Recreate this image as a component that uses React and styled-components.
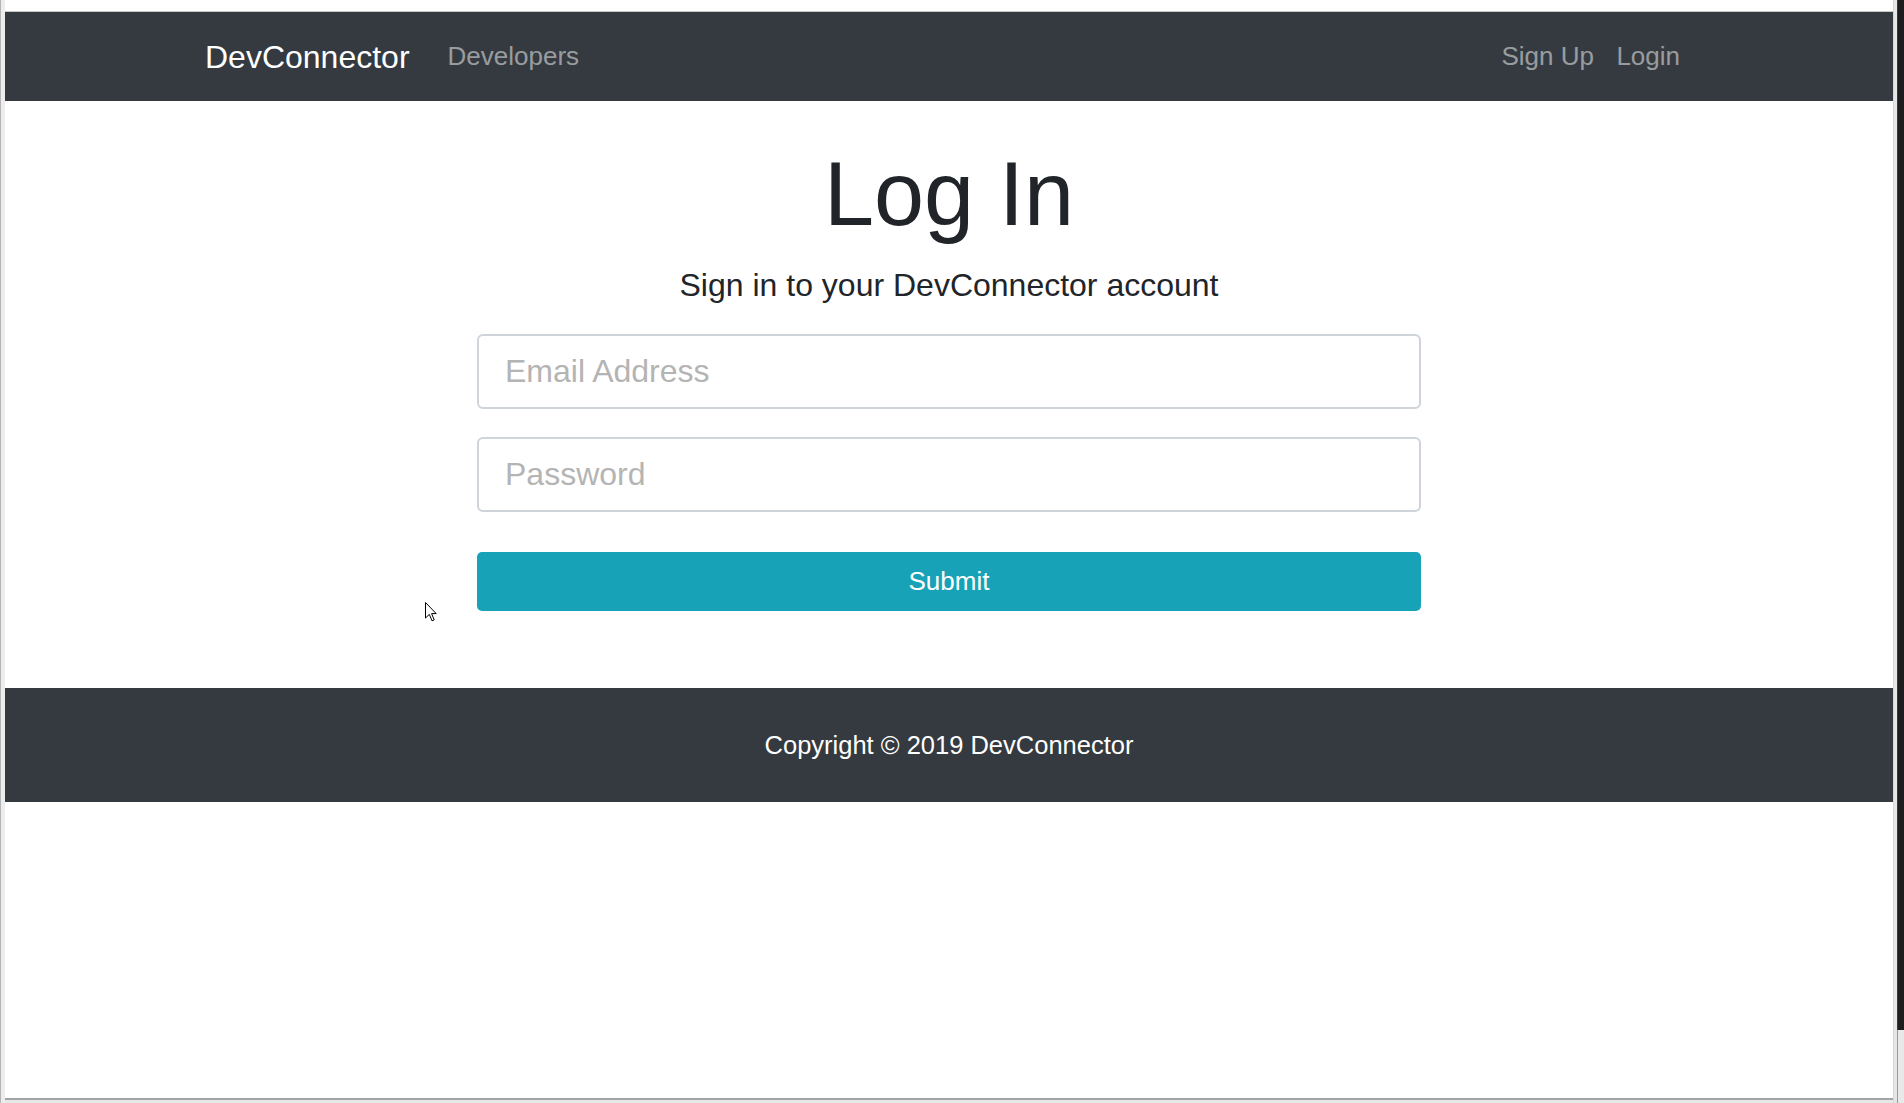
import React from "react";
import styled, { createGlobalStyle } from "styled-components";

const GlobalStyle = createGlobalStyle`
  html, body { margin: 0; padding: 0; height: 100%; }
  body {
    font-family: "Liberation Sans", Arial, sans-serif;
    background: #ffffff;
    overflow: hidden;
  }
  #root { height: 100%; }
  * { box-sizing: border-box; }
`;

const Frame = styled.div`
  display: flex;
  width: 100%;
  height: 100vh;
  position: relative;
`;

const LeftEdge = styled.div`
  width: 5px;
  flex: none;
  border-left: 1px solid #b4b4b4;
  background: #ededed;
`;

const RightEdge = styled.div`
  width: 4px;
  flex: none;
  background: #e6e6e6;
  border-left: 1px solid #d6d6d6;
`;

const OuterEdge = styled.div`
  width: 7px;
  flex: none;
  display: flex;
  flex-direction: column;
`;

const OuterDark = styled.div`
  height: 1030px;
  background: #1d1d1f;
  border-left: 1px solid #3a3a3a;
`;

const OuterLight = styled.div`
  flex: 1;
  background: #e9e9e9;
  border-left: 1px solid #9a9a9a;
`;

const Viewport = styled.div`
  flex: 1;
  display: flex;
  flex-direction: column;
  min-width: 0;
`;

const TopStrip = styled.div`
  height: 12px;
  flex: none;
  background: #ffffff;
  border-bottom: 1px solid #c8c8c8;
`;

const Navbar = styled.nav`
  height: 89px;
  flex: none;
  background: #343a40;
  display: flex;
  justify-content: center;
`;

const NavInner = styled.div`
  width: 1488px;
  display: flex;
  align-items: center;
  justify-content: space-between;
`;

const NavGroup = styled.div`
  display: flex;
  align-items: center;
`;

const Brand = styled.a`
  font-size: 32px;
  color: #ffffff;
  text-decoration: none;
  margin-right: 26px;
  line-height: 1.5;
`;

const NavLink = styled.a`
  font-size: 26px;
  color: rgba(255, 255, 255, 0.5);
  text-decoration: none;
  padding: 0 ${(p) => p.$pr ?? 12}px 0 ${(p) => p.$pl ?? 12}px;
  line-height: 1.5;
`;

const Main = styled.main`
  display: flex;
  flex-direction: column;
  align-items: center;
  padding-top: 39px;
  padding-bottom: 77px;
`;

const Title = styled.h1`
  margin: 0 0 13px;
  font-size: 90px;
  font-weight: 300;
  line-height: 1.2;
  color: #212529;
`;

const Lead = styled.p`
  margin: 0 0 25px;
  font-size: 32px;
  line-height: 1.5;
  color: #212529;
`;

const Form = styled.form`
  width: 944px;
  display: flex;
  flex-direction: column;
`;

const Input = styled.input`
  height: 75px;
  width: 100%;
  margin-bottom: ${(p) => p.$mb}px;
  padding: 0 26px;
  font-family: "Liberation Sans", Arial, sans-serif;
  font-size: 32px;
  color: #495057;
  background: #ffffff;
  border: 2px solid #ced4da;
  border-radius: 6px;
  outline: none;
  &::placeholder {
    color: #b4b4b4;
  }
`;

const Submit = styled.button`
  height: 59px;
  width: 100%;
  font-family: "Liberation Sans", Arial, sans-serif;
  font-size: 26px;
  color: #ffffff;
  background: #17a2b8;
  border: none;
  border-radius: 5px;
  cursor: pointer;
`;

const Footer = styled.footer`
  flex: none;
  background: #343a40;
  color: #ffffff;
  text-align: center;
  padding: 38px 0;
  font-size: 25.5px;
  line-height: 1.5;
`;

const Filler = styled.div`
  flex: 1;
  background: #ffffff;
`;

const BottomEdge = styled.div`
  height: 5px;
  flex: none;
  border-top: 2px solid #a4a4a4;
  background: #e8e8e8;
`;

const Cursor = styled.svg`
  position: absolute;
  left: 425px;
  top: 602px;
  width: 12px;
  height: 20px;
  pointer-events: none;
`;

export default function App() {
  return (
    <>
      <GlobalStyle />
      <Frame>
        <LeftEdge />
        <Viewport>
          <TopStrip />
          <Navbar>
            <NavInner>
              <NavGroup>
                <Brand href="#">DevConnector</Brand>
                <NavLink href="#">Developers</NavLink>
              </NavGroup>
              <NavGroup>
                <NavLink href="#" $pr={11}>
                  Sign Up
                </NavLink>
                <NavLink href="#" $pl={11.5} $pr={13}>
                  Login
                </NavLink>
              </NavGroup>
            </NavInner>
          </Navbar>
          <Main>
            <Title>Log In</Title>
            <Lead>Sign in to your DevConnector account</Lead>
            <Form onSubmit={(e) => e.preventDefault()}>
              <Input type="email" placeholder="Email Address" $mb={28} />
              <Input type="password" placeholder="Password" $mb={40} />
              <Submit type="submit">Submit</Submit>
            </Form>
          </Main>
          <Footer>Copyright © 2019 DevConnector</Footer>
          <Filler />
          <BottomEdge />
        </Viewport>
        <RightEdge />
        <OuterEdge>
          <OuterDark />
          <OuterLight />
        </OuterEdge>
        <Cursor viewBox="0 0 12 20">
          <path
            d="M0.5 0.5 L0.5 16 L4.3 12.4 L7 18.8 L9.2 17.9 L6.6 11.6 L11.2 11.6 Z"
            fill="#ffffff"
            stroke="#000000"
            strokeWidth="1"
            strokeLinejoin="miter"
          />
        </Cursor>
      </Frame>
    </>
  );
}
